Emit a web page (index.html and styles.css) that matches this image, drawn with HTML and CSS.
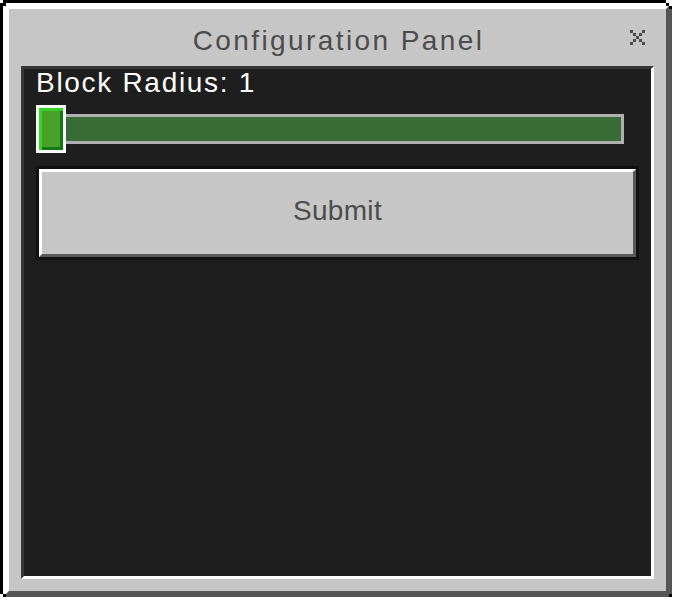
FILE: index.html
```html
<!DOCTYPE html>
<html>
<head>
<meta charset="utf-8">
<link rel="stylesheet" href="styles.css">
</head>
<body>
<div class="dialog">
  <div class="frame">
    <div class="header">
      <span class="title">Configuration Panel</span>
      <span class="close">
        <svg width="15" height="15" viewBox="0 0 5 5" shape-rendering="crispEdges">
          <rect x="0" y="0" width="1" height="1" fill="#4c4c4c"/>
          <rect x="4" y="0" width="1" height="1" fill="#4c4c4c"/>
          <rect x="1" y="1" width="1" height="1" fill="#4c4c4c"/>
          <rect x="3" y="1" width="1" height="1" fill="#4c4c4c"/>
          <rect x="2" y="2" width="1" height="1" fill="#4c4c4c"/>
          <rect x="1" y="3" width="1" height="1" fill="#4c4c4c"/>
          <rect x="3" y="3" width="1" height="1" fill="#4c4c4c"/>
          <rect x="0" y="4" width="1" height="1" fill="#4c4c4c"/>
          <rect x="4" y="4" width="1" height="1" fill="#4c4c4c"/>
        </svg>
      </span>
    </div>
    <div class="panel">
      <div class="label">Block Radius: 1</div>
      <div class="slider">
        <div class="track"></div>
        <div class="knob"></div>
      </div>
      <div class="button"><div class="face">Submit</div></div>
    </div>
  </div>
</div>
</body>
</html>
```
FILE: styles.css
```css
html, body {
  margin: 0;
  background: #ffffff;
}
body {
  width: 675px;
  height: 600px;
  overflow: hidden;
  font-family: "Liberation Sans", Arial, sans-serif;
}
.dialog {
  position: relative;
  width: 672px;
  height: 597px;
  box-sizing: border-box;
  border-top: 3px solid #000;
  border-left: 3px solid #000;
  display: flex;
}
.dialog::after {
  content: "";
  position: absolute;
  top: -3px;
  left: -3px;
  width: 3px;
  height: 3px;
  background: #fff;
  box-shadow:
    3px 3px 0 #000,
    666px 0 0 #fff,
    669px 0 0 #fff,
    669px 3px 0 #fff,
    666px 3px 0 #000,
    669px 6px 0 #000,
    0 594px 0 #fff,
    3px 594px 0 #000,
    669px 594px 0 #000;
}
.frame {
  flex: 1;
  display: flex;
  flex-direction: column;
  border-top: 6px solid #fff;
  border-left: 6px solid #fff;
  border-right: 6px solid #555;
  border-bottom: 6px solid #555;
  background: #c6c6c6;
  padding: 0 12px 12px;
}
.header {
  position: relative;
  height: 57px;
  box-sizing: border-box;
  padding-top: 6px;
  padding-left: 2px;
  line-height: 51px;
  text-align: center;
  font-size: 28px;
  color: #4c4c4c;
  letter-spacing: 2.4px;
}
.close {
  position: absolute;
  top: 21px;
  right: 9px;
  width: 15px;
  height: 15px;
  line-height: 0;
}
.panel {
  flex: 1;
  border-top: 3px solid #373737;
  border-left: 3px solid #373737;
  border-right: 3px solid #fff;
  border-bottom: 3px solid #fff;
  background: #1e1e1e;
  padding: 0 12px;
}
.label {
  color: #fff;
  font-size: 28px;
  line-height: 28px;
  height: 28px;
  letter-spacing: 1.7px;
}
.slider {
  position: relative;
  width: 588px;
  height: 48px;
  box-sizing: border-box;
  padding-top: 9px;
  margin-top: 8px;
}
.track {
  height: 30px;
  box-sizing: border-box;
  border: 3px solid #b0b0b0;
  background: #386b35;
}
.knob {
  position: absolute;
  left: 0;
  top: 0;
  width: 30px;
  height: 48px;
  box-sizing: border-box;
  border: 3px solid #fff;
  background: #4aa12a;
  box-shadow: inset 3px 3px 0 #33d423, inset -3px -3px 0 #107b10;
}
.button {
  margin-top: 13px;
  height: 94px;
  box-sizing: border-box;
  border: 3px solid #111;
}
.face {
  height: 100%;
  box-sizing: border-box;
  border-top: 3px solid #fff;
  border-left: 3px solid #fff;
  border-right: 3px solid #5a5a5a;
  border-bottom: 3px solid #5a5a5a;
  background: #c6c6c6;
  text-align: center;
  color: #4c4c4c;
  font-size: 28px;
  line-height: 78px;
  padding-bottom: 4px;
  letter-spacing: 0.3px;
}
```
